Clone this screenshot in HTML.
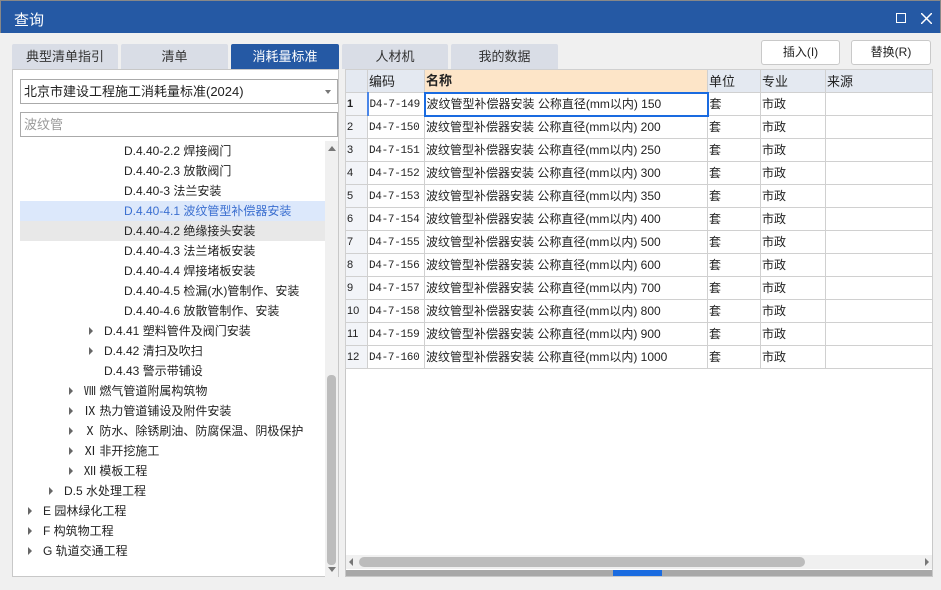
<!DOCTYPE html>
<html><head><meta charset="utf-8"><style>
*{box-sizing:border-box;margin:0;padding:0}
body{width:941px;height:590px;background:#f0f0f0;font-family:"Liberation Sans","Noto Sans CJK SC",sans-serif;font-size:12px;color:#222;position:relative;overflow:hidden}
.abs{position:absolute}
.title{left:0;top:0;width:941px;height:33px;background:#2559a4;color:#fff;font-size:15px;border:1px solid #888;border-bottom:none}
.tab{top:44px;height:25px;background:#d9dde6;text-align:center;line-height:25px;font-size:13px;color:#333;border-radius:2px 2px 0 0}
.tab.on{background:#2559a4;color:#fff}
.btn{top:40px;height:25px;background:#fff;border:1px solid #c9c9c9;border-radius:3px;text-align:center;line-height:23px;font-size:12px}
.left{left:12px;top:69px;width:327px;height:508px;background:#fff;border:1px solid #c8c8c8}
.tr{position:absolute;height:20px;line-height:20px;font-size:12px;white-space:nowrap}
.arr{position:absolute;width:0;height:0;border-left:4px solid #666;border-top:4px solid transparent;border-bottom:4px solid transparent}
table{border-collapse:collapse;position:absolute;left:345px;top:69px;table-layout:fixed;width:587px}
td{border:1px solid #d0d0d0;height:23px;line-height:21px;padding:0 1px;white-space:nowrap;overflow:hidden;font-size:12px;vertical-align:middle}
td.m{font-family:"Liberation Mono",monospace;font-size:11px;letter-spacing:-0.3px;padding-top:3px;line-height:17px}
tr.h td{background:#e4e9f1;font-size:13px}
td.n{background:#f2f4f8;font-size:11px}
</style></head><body>
<div class="abs title"><span style="position:absolute;left:13px;top:8px">查询</span>
<div style="position:absolute;left:895px;top:12px;width:10px;height:10px;border:1.5px solid #fff"></div>
<svg style="position:absolute;left:920px;top:12px" width="11" height="11"><path d="M0 0L11 11M11 0L0 11" stroke="#fff" stroke-width="1.5"/></svg></div>
<div class="abs tab" style="left:12px;width:106px">典型清单指引</div>
<div class="abs tab" style="left:121px;width:107px">清单</div>
<div class="abs tab on" style="left:231px;width:108px">消耗量标准</div>
<div class="abs tab" style="left:342px;width:106px">人材机</div>
<div class="abs tab" style="left:451px;width:107px">我的数据</div>
<div class="abs btn" style="left:761px;width:79px">插入(I)</div>
<div class="abs btn" style="left:851px;width:80px">替换(R)</div>
<div class="abs left">
<div style="position:absolute;left:7px;top:9px;width:318px;height:25px;border:1px solid #aaa;line-height:23px;padding-left:3px;font-size:13px">北京市建设工程施工消耗量标准(2024)<span style="position:absolute;right:6px;top:10px;border-top:4px solid #777;border-left:3px solid transparent;border-right:3px solid transparent"></span></div>
<div style="position:absolute;left:7px;top:42px;width:318px;height:25px;border:1px solid #aaa;line-height:23px;padding-left:3px;font-size:13px;color:#999">波纹管</div>
<div style="position:absolute;left:312px;top:71px;width:13px;height:436px;background:#f0f0f0"></div>
<div style="position:absolute;left:314px;top:305px;width:9px;height:190px;background:#bcbcbc;border-radius:4px"></div>
<div style="position:absolute;left:315px;top:76px;border-bottom:5px solid #777;border-left:4px solid transparent;border-right:4px solid transparent"></div>
<div style="position:absolute;left:315px;top:497px;border-top:5px solid #777;border-left:4px solid transparent;border-right:4px solid transparent"></div>
<div style="position:absolute;left:7px;top:131px;width:305px;height:20px;background:#dce8fb"></div>
<div style="position:absolute;left:7px;top:151px;width:305px;height:20px;background:#e8e8e8"></div>
<div class="tr" style="left:111px;top:71px">D.4.40-2.2 焊接阀门</div>
<div class="tr" style="left:111px;top:91px">D.4.40-2.3 放散阀门</div>
<div class="tr" style="left:111px;top:111px">D.4.40-3 法兰安装</div>
<div class="tr" style="left:111px;top:131px;color:#3b6fd0">D.4.40-4.1 波纹管型补偿器安装</div>
<div class="tr" style="left:111px;top:151px">D.4.40-4.2 绝缘接头安装</div>
<div class="tr" style="left:111px;top:171px">D.4.40-4.3 法兰堵板安装</div>
<div class="tr" style="left:111px;top:191px">D.4.40-4.4 焊接堵板安装</div>
<div class="tr" style="left:111px;top:211px">D.4.40-4.5 检漏(水)管制作、安装</div>
<div class="tr" style="left:111px;top:231px">D.4.40-4.6 放散管制作、安装</div>
<div class="arr" style="left:76px;top:257px"></div><div class="tr" style="left:91px;top:251px">D.4.41 塑料管件及阀门安装</div>
<div class="arr" style="left:76px;top:277px"></div><div class="tr" style="left:91px;top:271px">D.4.42 清扫及吹扫</div>
<div class="tr" style="left:91px;top:291px">D.4.43 警示带铺设</div>
<div class="arr" style="left:56px;top:317px"></div><div class="tr" style="left:71px;top:311px">Ⅷ 燃气管道附属构筑物</div>
<div class="arr" style="left:56px;top:337px"></div><div class="tr" style="left:71px;top:331px">Ⅸ 热力管道铺设及附件安装</div>
<div class="arr" style="left:56px;top:357px"></div><div class="tr" style="left:71px;top:351px">Ⅹ 防水、除锈刷油、防腐保温、阴极保护</div>
<div class="arr" style="left:56px;top:377px"></div><div class="tr" style="left:71px;top:371px">Ⅺ 非开挖施工</div>
<div class="arr" style="left:56px;top:397px"></div><div class="tr" style="left:71px;top:391px">Ⅻ 模板工程</div>
<div class="arr" style="left:36px;top:417px"></div><div class="tr" style="left:51px;top:411px">D.5 水处理工程</div>
<div class="arr" style="left:15px;top:437px"></div><div class="tr" style="left:30px;top:431px">E 园林绿化工程</div>
<div class="arr" style="left:15px;top:457px"></div><div class="tr" style="left:30px;top:451px">F 构筑物工程</div>
<div class="arr" style="left:15px;top:477px"></div><div class="tr" style="left:30px;top:471px">G 轨道交通工程</div>
</div>
<div class="abs" style="left:345px;top:69px;width:588px;height:508px;background:#fff;border:1px solid #c8c8c8"></div>
<table>
<colgroup><col style="width:22px"><col style="width:57px"><col style="width:283px"><col style="width:53px"><col style="width:65px"><col style="width:107px"></colgroup>
<tr class="h"><td></td><td>编码</td><td style="background:#fde5c8;font-weight:bold">名称</td><td>单位</td><td>专业</td><td>来源</td></tr>
<tr><td class="n" style="font-weight:bold;border-right:2px solid #4a86e8">1</td><td class="m">D4-7-149</td><td style="border:2px solid #1a6be0">波纹管型补偿器安装 公称直径(mm以内) 150</td><td>套</td><td>市政</td><td></td></tr>
<tr><td class="n">2</td><td class="m">D4-7-150</td><td>波纹管型补偿器安装 公称直径(mm以内) 200</td><td>套</td><td>市政</td><td></td></tr>
<tr><td class="n">3</td><td class="m">D4-7-151</td><td>波纹管型补偿器安装 公称直径(mm以内) 250</td><td>套</td><td>市政</td><td></td></tr>
<tr><td class="n">4</td><td class="m">D4-7-152</td><td>波纹管型补偿器安装 公称直径(mm以内) 300</td><td>套</td><td>市政</td><td></td></tr>
<tr><td class="n">5</td><td class="m">D4-7-153</td><td>波纹管型补偿器安装 公称直径(mm以内) 350</td><td>套</td><td>市政</td><td></td></tr>
<tr><td class="n">6</td><td class="m">D4-7-154</td><td>波纹管型补偿器安装 公称直径(mm以内) 400</td><td>套</td><td>市政</td><td></td></tr>
<tr><td class="n">7</td><td class="m">D4-7-155</td><td>波纹管型补偿器安装 公称直径(mm以内) 500</td><td>套</td><td>市政</td><td></td></tr>
<tr><td class="n">8</td><td class="m">D4-7-156</td><td>波纹管型补偿器安装 公称直径(mm以内) 600</td><td>套</td><td>市政</td><td></td></tr>
<tr><td class="n">9</td><td class="m">D4-7-157</td><td>波纹管型补偿器安装 公称直径(mm以内) 700</td><td>套</td><td>市政</td><td></td></tr>
<tr><td class="n">10</td><td class="m">D4-7-158</td><td>波纹管型补偿器安装 公称直径(mm以内) 800</td><td>套</td><td>市政</td><td></td></tr>
<tr><td class="n">11</td><td class="m">D4-7-159</td><td>波纹管型补偿器安装 公称直径(mm以内) 900</td><td>套</td><td>市政</td><td></td></tr>
<tr><td class="n">12</td><td class="m">D4-7-160</td><td>波纹管型补偿器安装 公称直径(mm以内) 1000</td><td>套</td><td>市政</td><td></td></tr>
</table>
<div class="abs" style="left:346px;top:555px;width:586px;height:14px;background:#f0f0f0"></div>
<div class="abs" style="left:359px;top:557px;width:446px;height:10px;background:#bcbcbc;border-radius:5px"></div>
<div class="abs" style="left:349px;top:558px;border-right:4px solid #777;border-top:4px solid transparent;border-bottom:4px solid transparent"></div>
<div class="abs" style="left:925px;top:558px;border-left:4px solid #777;border-top:4px solid transparent;border-bottom:4px solid transparent"></div>
<div class="abs" style="left:346px;top:570px;width:586px;height:6px;background:#a8a8a8"></div>
<div class="abs" style="left:613px;top:570px;width:49px;height:6px;background:#1a6be0"></div>
</body></html>
